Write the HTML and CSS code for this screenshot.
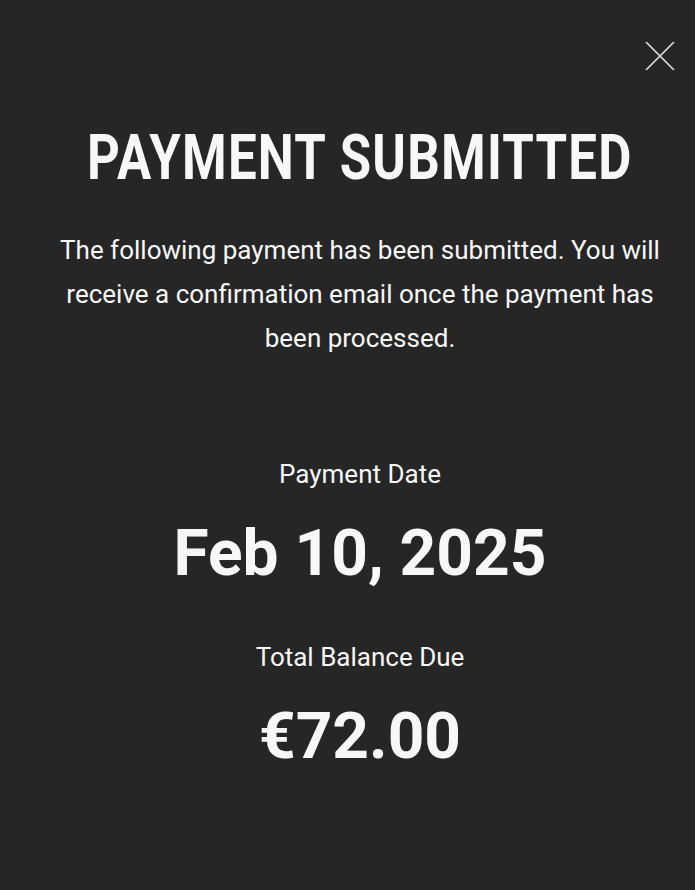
FILE: index.html
```html
<!DOCTYPE html>
<html lang="en">
<head>
<meta charset="utf-8">
<title>Payment Submitted</title>
<link rel="stylesheet" href="styles.css">
</head>
<body>
<div class="modal">
  <button class="close" aria-label="Close">
    <svg width="32" height="32" viewBox="0 0 32 32"><path d="M2 2 L30 30 M30 2 L2 30" stroke="#e0e0e0" stroke-width="1.6" fill="none"/></svg>
  </button>
  <h1 class="title"><span class="title-text">PAYMENT SUBMITTED</span></h1>
  <p class="intro">The following payment has been submitted. You will receive a confirmation email once the payment has been processed.</p>
  <div class="info">
    <div class="label">Payment Date</div>
    <div class="value">Feb 10, 2025</div>
    <div class="label second">Total Balance Due</div>
    <div class="value">€72.00</div>
  </div>
</div>
</body>
</html>
```

FILE: styles.css
```css
html, body {
  margin: 0;
  padding: 0;
  background: #262626;
}
body {
  width: 695px;
  height: 890px;
  overflow: hidden;
  font-family: Roboto, "Liberation Sans", sans-serif;
  color: #f7f7f7;
}
.modal {
  position: relative;
  display: flex;
  flex-direction: column;
  align-items: center;
  padding: 0 0 0 25px;
}
.close {
  position: absolute;
  top: 40px;
  right: 19px;
  width: 32px;
  height: 32px;
  padding: 0;
  border: 0;
  background: none;
}
.close svg { display: block; }
.title {
  margin: 126px 0 0;
  font-family: Roboto, "Liberation Sans", sans-serif;
  font-weight: 700;
  font-size: 63px;
  line-height: 64px;
  text-align: center;
  white-space: nowrap;
}
.title-text {
  display: inline-block;
  letter-spacing: 1.5px;
  transform: scaleX(0.81);
}
.intro {
  margin: 38px 0 0;
  width: 620px;
  font-size: 26px;
  line-height: 44px;
  text-align: center;
}
.info {
  margin-top: 99px;
  display: flex;
  flex-direction: column;
  align-items: center;
}
.label {
  font-size: 26px;
  line-height: 30px;
}
.label.second { margin-top: 51px; }
.value {
  margin-top: 28px;
  font-weight: 700;
  font-size: 64px;
  line-height: 74px;
}
```
